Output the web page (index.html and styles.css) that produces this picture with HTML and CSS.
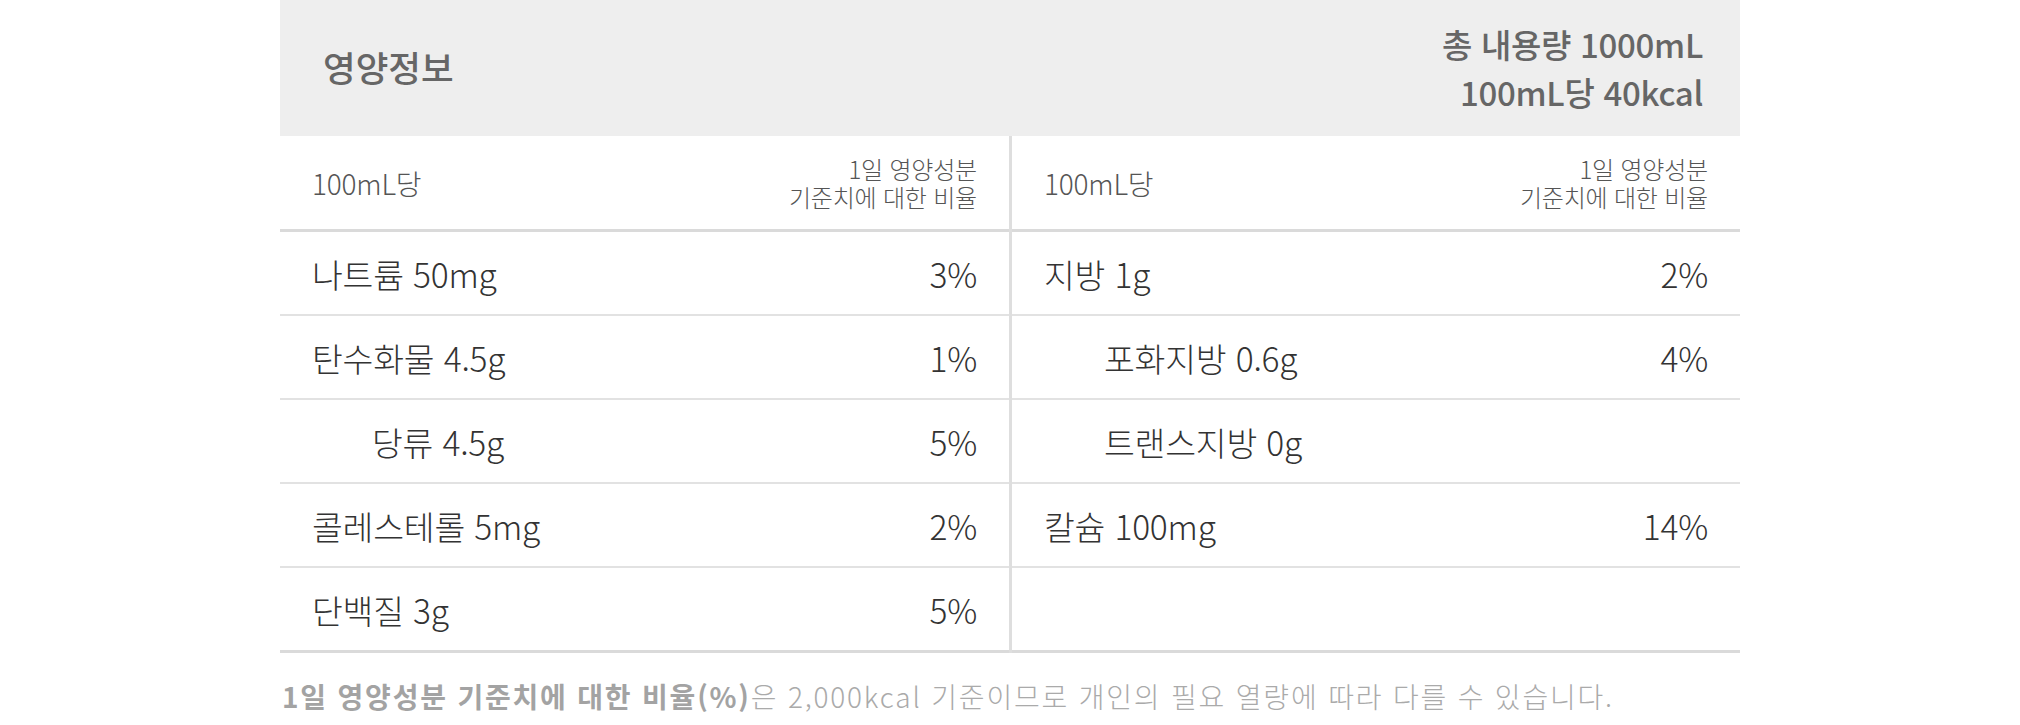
FILE: index.html
```html
<!DOCTYPE html>
<html lang="ko">
<head>
<meta charset="utf-8">
<title>영양정보</title>
<link rel="stylesheet" href="styles.css">
</head>
<body>
<div class="wrap">
  <div class="nutri">
    <div class="head">
      <div class="title">영양정보</div>
      <div class="total">총 내용량 1000mL<br>100mL당 40kcal</div>
    </div>
    <div class="cols">
      <div class="col">
        <div class="row sub"><span>100mL당</span><span class="ratio">1일 영양성분<br>기준치에 대한 비율</span></div>
        <div class="row"><span>나트륨 50mg</span><span>3%</span></div>
        <div class="row"><span>탄수화물 4.5g</span><span>1%</span></div>
        <div class="row"><span class="indent">당류 4.5g</span><span>5%</span></div>
        <div class="row"><span>콜레스테롤 5mg</span><span>2%</span></div>
        <div class="row"><span>단백질 3g</span><span>5%</span></div>
      </div>
      <div class="col right">
        <div class="row sub"><span>100mL당</span><span class="ratio">1일 영양성분<br>기준치에 대한 비율</span></div>
        <div class="row"><span>지방 1g</span><span>2%</span></div>
        <div class="row"><span class="indent">포화지방 0.6g</span><span>4%</span></div>
        <div class="row"><span class="indent">트랜스지방 0g</span><span></span></div>
        <div class="row"><span>칼슘 100mg</span><span>14%</span></div>
        <div class="row"><span></span><span></span></div>
      </div>
    </div>
  </div>
  <p class="note"><strong>1일 영양성분 기준치에 대한 비율(%)</strong>은 2,000kcal 기준이므로 개인의 필요 열량에 따라 다를 수 있습니다.</p>
</div>
</body>
</html>
```

FILE: styles.css
```css
html, body {
  margin: 0;
  padding: 0;
  background: #fff;
}

body {
  font-family: "Noto Sans CJK KR", "Noto Sans", sans-serif;
  color: #333;
}

.wrap {
  width: 1460px;
  margin: 0 auto;
}

.head {
  height: 136px;
  background: #eeeeee;
  display: flex;
  align-items: center;
  justify-content: space-between;
  padding: 0 37px 0 43px;
  box-sizing: border-box;
  color: #666;
}

.title {
  font-size: 35.5px;
  font-weight: 500;
  margin-bottom: 4px;
}

.total {
  font-size: 33px;
  font-weight: 500;
  line-height: 48px;
  text-align: right;
  letter-spacing: -0.3px;
}

.cols {
  display: grid;
  grid-template-columns: 729px 731px;
}

.col.right {
  border-left: 3px solid #dedede;
}

.row {
  height: 82px;
  border-bottom: 2px solid #e2e2e2;
  display: flex;
  align-items: center;
  justify-content: space-between;
  padding: 0 32px 0 32px;
  font-size: 33.5px;
  font-weight: 300;
  letter-spacing: -0.2px;
}

.row:last-child {
  border-bottom: 3px solid #dadada;
}

.row.sub {
  height: 93px;
  border-bottom: 3px solid #dadada;
  font-size: 28px;
  color: #555;
}

.ratio {
  font-size: 24px;
  line-height: 28px;
  text-align: right;
}

.indent {
  margin-left: 60px;
}

.note {
  margin: 24px 0 0 2px;
  font-size: 28px;
  line-height: 38px;
  letter-spacing: 1.8px;
  color: #aaa;
  font-weight: 300;
}

.note strong {
  font-weight: 700;
  color: #a3a3a3;
}
```
